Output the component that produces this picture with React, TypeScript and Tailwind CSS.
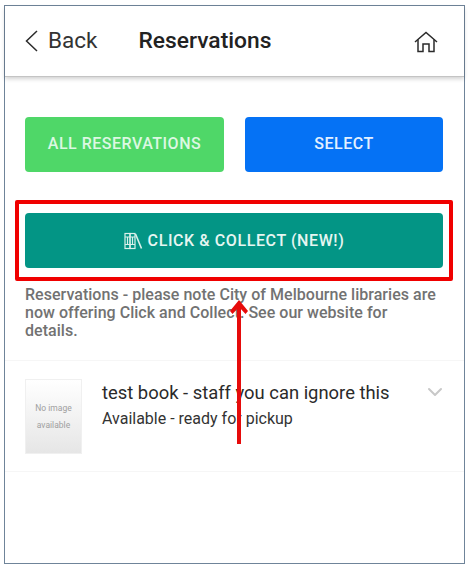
import React from 'react';
import { ChevronDown } from 'lucide-react';

const font = { fontFamily: 'Roboto, sans-serif' };

const BackIcon = () => (
  <svg width="13" height="22" viewBox="0 0 13 22" fill="none" stroke="#2b2b2b" strokeWidth="1.5">
    <path d="M12 1 L1.5 11 L12 21" />
  </svg>
);

const HomeIcon = () => (
  <svg width="24" height="22" viewBox="0 0 24 22" fill="none" stroke="#2b2b2b" strokeWidth="1.5">
    <path d="M1 11 L12 1.5 L23 11" />
    <path d="M4 8.5 V20.5 H9 V13 H15 V20.5 H20 V8.5" />
  </svg>
);

const BooksIcon = () => (
  <svg width="19" height="18" viewBox="0 0 19 18" fill="none" stroke="#d9f0ea" strokeWidth="1.2">
    <rect x="1" y="1.5" width="5" height="15" />
    <rect x="6" y="1.5" width="5" height="15" />
    <path d="M1 5 H11 M1 12.5 H11 M3.5 5 V12.5 M8.5 5 V12.5" />
    <path d="M11.5 2 L17.5 16.5" strokeWidth="1.6" />
  </svg>
);

export default function App() {
  return (
    <div className="h-[569px] w-[471px] bg-white pt-[5px] pl-[4px]" style={font}>
      <div className="relative h-[559px] w-[461px] border border-[#6f8499] bg-white">
        {/* Header */}
        <div className="flex h-[71px] items-center border-b border-[#c4c4c4] shadow-[0_2px_4px_rgba(0,0,0,0.18)]">
          <div className="ml-[20px] mt-[-1px]">
            <BackIcon />
          </div>
          <span className="ml-[10px] text-[22.5px] text-[#333333]">Back</span>
          <span className="ml-[41px] text-[22.8px] font-medium text-[#222222]">Reservations</span>
          <div className="ml-auto mr-[26px] mt-[2px]">
            <HomeIcon />
          </div>
        </div>

        {/* Buttons */}
        <div className="flex gap-[21px] pl-[20px] pt-[40px]">
          <button className="h-[55px] w-[199px] rounded-[4px] bg-[#4fd768] pb-[2px] text-[16px] font-medium tracking-[0.5px] text-[#dcf8e2]">
            ALL RESERVATIONS
          </button>
          <button className="h-[55px] w-[198px] rounded-[4px] bg-[#0572f5] pb-[2px] text-[16px] font-medium tracking-[0.5px] text-[#e3f0ff]">
            SELECT
          </button>
        </div>

        <div className="ml-[10px] mt-[28px] flex h-[81px] w-[438px] items-center rounded-[2px] border-[4px] border-[#f00000] pl-[6px]">
          <button className="flex h-[55px] w-[418px] items-center justify-center gap-[5px] rounded-[4px] bg-[#039585] text-[16px] font-medium tracking-[0.6px] text-[#e6f6f2]">
            <BooksIcon />
            CLICK &amp; COLLECT (NEW!)
          </button>
        </div>

        <p className="ml-[20px] mt-[5px] w-[415px] text-[16px] font-medium leading-[18px] tracking-[0.03px] text-[#727272]">
          Reservations - please note City of Melbourne libraries are now offering Click and Collect. See our website for
          details.
        </p>

        {/* Reservation row */}
        <div className="mt-[20px] flex h-[112px] border-y border-[#f6f6f6] pl-[20px] pt-[18px]">
          <div className="flex h-[75px] w-[57px] flex-col items-center justify-center gap-[4px] border border-[#f0f0f0] bg-gradient-to-b from-white to-[#e6e6e6] text-[8.5px] text-[#a0a0a0]">
            <span>No image</span>
            <span>available</span>
          </div>
          <div className="ml-[20px] flex w-[320px] flex-col">
            <span className="mt-[2px] text-[18.4px] leading-[24px] text-[#2a2a2a]">test book - staff you can ignore this</span>
            <span className="mt-[3px] text-[16px] leading-[22px] text-[#333333]">Available - ready for pickup</span>
          </div>
          <ChevronDown size={24} strokeWidth={2} className="ml-[1px] mt-[1px] text-[#c8c8c8]" />
        </div>

        {/* Annotation arrow */}
        <svg className="absolute left-[224px] top-[290px]" width="20" height="150" viewBox="0 0 20 150" fill="#e60b0b">
          <rect x="8" y="8" width="4" height="140" />
          <path d="M1 15 L10 4 L19 15 L16.5 18 L10 11 L3.5 18 Z" />
        </svg>
      </div>
    </div>
  );
}
